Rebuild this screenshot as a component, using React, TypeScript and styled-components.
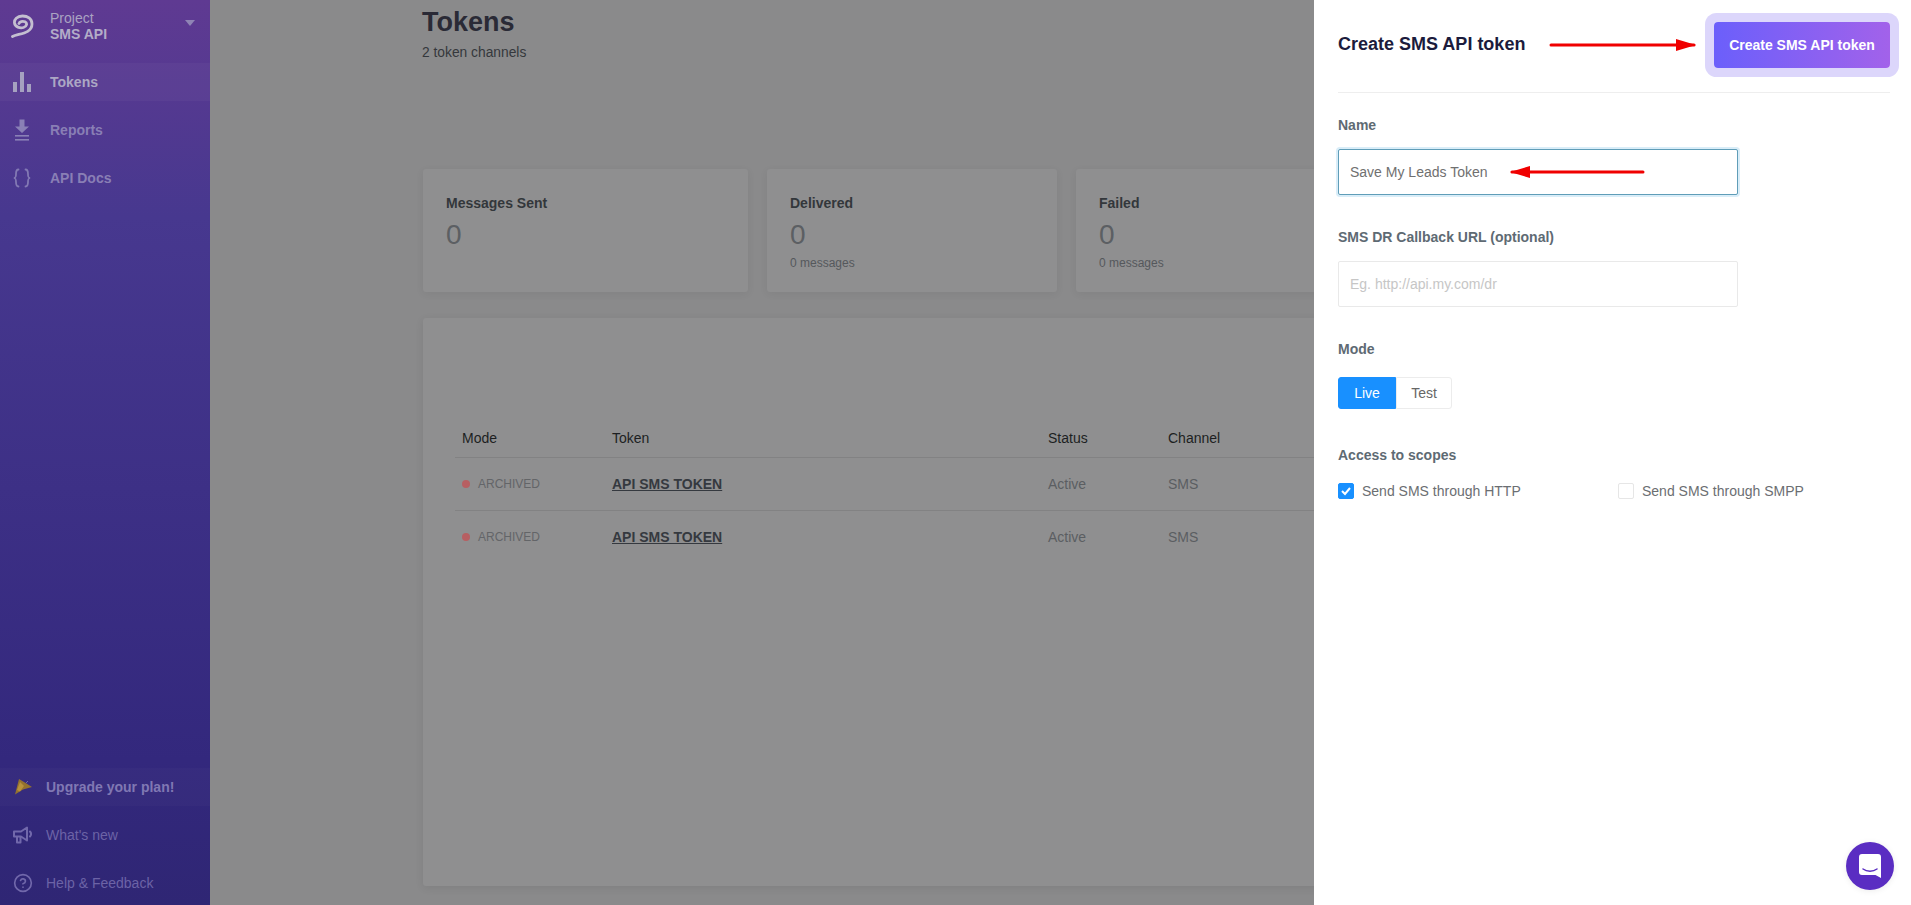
import React from 'react'
import styled, { createGlobalStyle } from 'styled-components'
import { CircleHelp } from 'lucide-react'

const GlobalStyle = createGlobalStyle`
  html, body {
    margin: 0;
    padding: 0;
    height: 100%;
    overflow: hidden;
  }
  body {
    font-family: "Liberation Sans", Arial, sans-serif;
    font-size: 14px;
    background: #8a8a8b;
  }
  * {
    box-sizing: border-box;
  }
`

const Page = styled.div`
  display: flex;
  width: 100vw;
  height: 100vh;
  overflow: hidden;
`

const Sidebar = styled.aside`
  display: flex;
  flex-direction: column;
  flex: 0 0 210px;
  height: 100%;
  background: linear-gradient(180deg, #5f3a92 0%, #47388f 24%, #33287d 84%, #2f2674 100%);
`

const ProjectHead = styled.div`
  display: flex;
  align-items: center;
  height: 63px;
  padding: 0 15px 11px 10px;
`

const ProjectName = styled.div`
  flex: 1;
  margin-left: 16px;
  line-height: 16px;
  color: #aaa3c2;
  strong {
    display: block;
    font-size: 14px;
    color: #b3adc8;
  }
`

const Caret = styled.span`
  width: 0;
  height: 0;
  margin-bottom: 7px;
  border-left: 5px solid transparent;
  border-right: 5px solid transparent;
  border-top: 6px solid #8f84b5;
`

const Nav = styled.nav`
  display: flex;
  flex-direction: column;
  gap: 10px;
  flex: 1;
`

const NavItem = styled.a<{ $active?: boolean }>`
  display: flex;
  align-items: center;
  gap: 16px;
  height: 38px;
  padding-left: 10px;
  font-weight: 700;
  color: ${p => (p.$active ? '#aca7c4' : '#897fb5')};
  background: ${p => (p.$active ? 'rgba(255, 255, 255, 0.035)' : 'transparent')};
`

const IconSlot = styled.span`
  display: flex;
  align-items: center;
  justify-content: center;
  width: 24px;
  height: 24px;
`

const FootNav = styled.div`
  display: flex;
  flex-direction: column;
  gap: 10px;
  padding-bottom: 3px;
`

const FootItem = styled.a<{ $strong?: boolean }>`
  display: flex;
  align-items: center;
  gap: 12px;
  height: 38px;
  padding-left: 12px;
  color: #6c63a6;
  font-weight: ${p => (p.$strong ? 700 : 400)};
  background: ${p => (p.$strong ? 'rgba(255, 255, 255, 0.02)' : 'transparent')};
  ${p => p.$strong && 'color: #8078b3;'}
`

const FootIcon = styled.span`
  display: flex;
  align-items: center;
  justify-content: center;
  width: 22px;
  height: 22px;
`

const Main = styled.main`
  flex: 1;
  min-width: 0;
  height: 100%;
  overflow: hidden;
  padding: 6px 0 0 212px;
`

const Title = styled.h1`
  margin: 0;
  font-size: 27px;
  line-height: 32px;
  font-weight: 700;
  color: #2a2a36;
`

const Subtitle = styled.div`
  margin-top: 4px;
  font-size: 13.8px;
  line-height: 21px;
  color: #35383c;
`

const CardRow = styled.div`
  display: flex;
  gap: 19px;
  width: 1000px;
  margin: 106px 0 0 1px;
`

const StatCard = styled.section<{ $width: number }>`
  flex: 0 0 ${p => p.$width}px;
  height: 123px;
  padding: 24px 23px;
  border-radius: 3px;
  background: #8f8f90;
  box-shadow: 0 2px 8px rgba(0, 0, 0, 0.06);
`

const StatTitle = styled.div`
  font-weight: 700;
  line-height: 20px;
  color: #33373b;
`

const StatValue = styled.div`
  margin-top: 2px;
  font-size: 28px;
  line-height: 40px;
  color: #5c5f63;
`

const StatNote = styled.div`
  font-size: 12px;
  line-height: 16px;
  color: #55585c;
`

const TableCard = styled.section`
  width: 1400px;
  height: 568px;
  margin: 26px 0 0 1px;
  padding: 101px 0 0 32px;
  border-radius: 3px;
  background: #8f8f90;
  box-shadow: 0 2px 8px rgba(0, 0, 0, 0.08);
`

const TableRow = styled.div<{ $header?: boolean; $last?: boolean }>`
  display: grid;
  grid-template-columns: 150px 436px 120px 1fr;
  align-items: center;
  height: ${p => (p.$header ? '39px' : '53px')};
  padding: 0 0 ${p => (p.$header ? '1px' : '0')} 7px;
  color: ${p => (p.$header ? '#1d1f22' : '#5b5e62')};
  border-bottom: 1px solid ${p => (p.$last ? 'transparent' : '#828283')};
`

const ModeCell = styled.span`
  display: flex;
  align-items: center;
  gap: 8px;
  font-size: 12px;
  color: #636568;
`

const Dot = styled.i`
  width: 8px;
  height: 8px;
  border-radius: 50%;
  background: #b75f62;
`

const TokenLink = styled.a`
  font-weight: 700;
  color: #35393f;
  text-decoration: underline;
`

const Drawer = styled.aside`
  position: relative;
  flex: 0 0 597px;
  height: 100%;
  padding: 0 21px 0 24px;
  background: #fff;
`

const DrawerHead = styled.header`
  display: flex;
  align-items: center;
  justify-content: space-between;
  height: 93px;
  padding: 0 0 3px;
  border-bottom: 1px solid #eeeeee;
`

const DrawerTitle = styled.h2`
  margin: 0;
  font-size: 18px;
  font-weight: 700;
  color: #1b1b3c;
`

const PrimaryButton = styled.button`
  width: 176px;
  height: 46px;
  border: 0;
  border-radius: 4px;
  font-family: inherit;
  font-size: 14px;
  font-weight: 700;
  color: #fff;
  background: linear-gradient(90deg, #6b5ffb 0%, #a262ea 100%);
  box-shadow: 0 0 0 9px #dcd6fb;
`

const Field = styled.div<{ $top: number }>`
  position: relative;
  margin-top: ${p => p.$top}px;
`

const Label = styled.label<{ $gap: number }>`
  display: block;
  margin-bottom: ${p => p.$gap}px;
  font-weight: 700;
  line-height: 20px;
  color: #5e6a73;
`

const TextInput = styled.input<{ $focused?: boolean }>`
  display: block;
  width: 400px;
  height: 46px;
  padding: 0 11px;
  border: 1px solid ${p => (p.$focused ? '#5f9db8' : '#e9e9e9')};
  border-radius: 2px;
  outline: 0;
  font-family: inherit;
  font-size: 14px;
  color: #707070;
  background: #fff;
  box-shadow: ${p => (p.$focused ? '0 0 0 2px #d9edf8' : 'none')};
  &::placeholder {
    color: #c6c6c6;
  }
`

const Segments = styled.div`
  display: flex;
  height: 32px;
`

const Segment = styled.span<{ $on?: boolean; $width: number }>`
  display: flex;
  align-items: center;
  justify-content: center;
  width: ${p => p.$width}px;
  color: ${p => (p.$on ? '#fff' : '#666')};
  background: ${p => (p.$on ? '#1890ff' : '#fff')};
  border: 1px solid ${p => (p.$on ? '#1890ff' : '#ececec')};
  border-radius: ${p => (p.$on ? '3px 0 0 3px' : '0 3px 3px 0')};
`

const ScopeGrid = styled.div`
  display: grid;
  grid-template-columns: 280px 1fr;
`

const Scope = styled.span`
  display: flex;
  align-items: center;
  gap: 8px;
  height: 16px;
  color: #6b6e72;
`

const Check = styled.span<{ $on?: boolean }>`
  display: flex;
  align-items: center;
  justify-content: center;
  width: 16px;
  height: 16px;
  border: 1px solid ${p => (p.$on ? '#1890ff' : '#e6e6e6')};
  border-radius: 2px;
  background: ${p => (p.$on ? '#1890ff' : '#fff')};
`

const Annotation = styled.svg<{ $left: number; $top: number; $width: number }>`
  position: absolute;
  left: ${p => p.$left}px;
  top: ${p => p.$top}px;
  width: ${p => p.$width}px;
  height: 14px;
  pointer-events: none;
`

const ChatButton = styled.button`
  position: absolute;
  right: 17px;
  bottom: 15px;
  display: flex;
  align-items: center;
  justify-content: center;
  width: 48px;
  height: 48px;
  padding: 0;
  border: 0;
  border-radius: 50%;
  background: #5a2dc2;
  box-shadow: 0 1px 6px rgba(0, 0, 0, 0.08);
`

function LogoIcon() {
  return (
    <svg width="24" height="24" viewBox="0 0 24 24" fill="none" stroke="#c4bfd0" strokeWidth="2.800" strokeLinecap="round">
      <path d="M2.500 22.500 C8 19.500 22 20 22 10 C22 4.500 17.500 2 12.500 2 C7 2 4 5.500 4.500 9 C5 13 10 14.500 13.500 13.500 C17 12.500 17.500 9 15 7.800 C12.500 6.800 9.500 7.500 9 9.500" />
    </svg>
  )
}

function BarsIcon() {
  return (
    <svg width="20" height="22" viewBox="0 0 20 22" fill="#a6a1c0">
      <rect x="1" y="11" width="4" height="10" />
      <rect x="8" y="1" width="4" height="20" />
      <rect x="15" y="13" width="4" height="8" />
    </svg>
  )
}

function DownloadIcon() {
  return (
    <svg width="16" height="22" viewBox="0 0 16 22" fill="#8a80b6">
      <path d="M5.500 0.500h5v7h4.500L8 14 1 7.500h4.500z" />
      <rect x="1" y="16" width="14" height="1.600" />
      <rect x="1" y="20" width="14" height="1.600" />
    </svg>
  )
}

function BracesIcon() {
  return (
    <svg width="20" height="20" viewBox="0 0 20 20" fill="none" stroke="#8379b4" strokeWidth="1.800" strokeLinecap="round">
      <path d="M6.500 1.500 C4 1.500 4 3.500 4 6 C4 8.500 4 9.500 2 10 C4 10.500 4 11.500 4 14 C4 16.500 4 18.500 6.500 18.500" />
      <path d="M13.500 1.500 C16 1.500 16 3.500 16 6 C16 8.500 16 9.500 18 10 C16 10.500 16 11.500 16 14 C16 16.500 16 18.500 13.500 18.500" />
    </svg>
  )
}

function PartyIcon() {
  return (
    <svg width="18" height="18" viewBox="0 0 18 18">
      <path d="M1 16.500 L5 1 L10 4 L18 9 L9 11.500 Z" fill="#94722f" />
      <path d="M3 12 L6 4 L10 8 L6 13.500 Z" fill="#b8923c" />
      <path d="M12 5 L14 3" stroke="#6f68a8" strokeWidth="1" />
    </svg>
  )
}

function MegaphoneIcon() {
  return (
    <svg width="20" height="18" viewBox="0 0 20 18" fill="none" stroke="#7168ab" strokeWidth="2" strokeLinejoin="round">
      <path d="M1 5.500 H8 L14 1.500 V14.500 L8 10.500 H1 Z" />
      <path d="M4 11 V16.500 H7.500 V11" />
      <path d="M17 5.500 C18.300 7 18.300 9 17 10.500" strokeLinecap="round" />
    </svg>
  )
}

function ChatIcon() {
  return (
    <svg width="24" height="26" viewBox="0 0 24 26">
      <path d="M4 1 H20 A3 3 0 0 1 23 4 V25 L17.500 22 H4 A3 3 0 0 1 1 19 V4 A3 3 0 0 1 4 1 Z" fill="#fff" />
      <path d="M5 16 C9 19 15 19 19 16" fill="none" stroke="#5a2dc2" strokeWidth="1.500" strokeLinecap="round" />
    </svg>
  )
}

function Arrow({ left, top, width, flip }: { left: number; top: number; width: number; flip?: boolean }) {
  const head = flip
    ? `M0 7 L20 1 L20 13 Z`
    : `M${width} 7 L${width - 20} 1 L${width - 20} 13 Z`
  return (
    <Annotation $left={left} $top={top} $width={width} viewBox={`0 0 ${width} 14`}>
      <line x1="2" y1="7" x2={width - 2} y2="7" stroke="#f00000" strokeWidth="3" strokeLinecap="round" />
      <path d={head} fill="#f00000" />
    </Annotation>
  )
}

const stats = [
  { title: 'Messages Sent', width: 325 },
  { title: 'Delivered', width: 290, note: '0 messages' },
  { title: 'Failed', width: 300, note: '0 messages' },
]

const rows = [0, 1]

export default function App() {
  return (
    <Page>
      <GlobalStyle />
      <Sidebar>
        <ProjectHead>
          <LogoIcon />
          <ProjectName>
            Project
            <strong>SMS API</strong>
          </ProjectName>
          <Caret />
        </ProjectHead>
        <Nav>
          <NavItem $active>
            <IconSlot><BarsIcon /></IconSlot>
            Tokens
          </NavItem>
          <NavItem>
            <IconSlot><DownloadIcon /></IconSlot>
            Reports
          </NavItem>
          <NavItem>
            <IconSlot><BracesIcon /></IconSlot>
            API Docs
          </NavItem>
        </Nav>
        <FootNav>
          <FootItem $strong>
            <FootIcon><PartyIcon /></FootIcon>
            Upgrade your plan!
          </FootItem>
          <FootItem>
            <FootIcon><MegaphoneIcon /></FootIcon>
            What's new
          </FootItem>
          <FootItem>
            <FootIcon><CircleHelp size={20} color="#7168ab" /></FootIcon>
            Help &amp; Feedback
          </FootItem>
        </FootNav>
      </Sidebar>

      <Main>
        <Title>Tokens</Title>
        <Subtitle>2 token channels</Subtitle>
        <CardRow>
          {stats.map(s => (
            <StatCard key={s.title} $width={s.width}>
              <StatTitle>{s.title}</StatTitle>
              <StatValue>0</StatValue>
              {s.note && <StatNote>{s.note}</StatNote>}
            </StatCard>
          ))}
        </CardRow>
        <TableCard>
          <TableRow $header>
            <span>Mode</span>
            <span>Token</span>
            <span>Status</span>
            <span>Channel</span>
          </TableRow>
          {rows.map(r => (
            <TableRow key={r} $last={r === rows.length - 1}>
              <ModeCell><Dot />ARCHIVED</ModeCell>
              <TokenLink>API SMS TOKEN</TokenLink>
              <span>Active</span>
              <span>SMS</span>
            </TableRow>
          ))}
        </TableCard>
      </Main>

      <Drawer>
        <DrawerHead>
          <DrawerTitle>Create SMS API token</DrawerTitle>
          <PrimaryButton>Create SMS API token</PrimaryButton>
        </DrawerHead>
        <Arrow left={235} top={38} width={147} />
        <Field $top={22}>
          <Label $gap={14}>Name</Label>
          <TextInput $focused readOnly defaultValue="Save My Leads Token" />
          <Arrow left={172} top={50} width={135} flip />
        </Field>
        <Field $top={32}>
          <Label $gap={14}>SMS DR Callback URL (optional)</Label>
          <TextInput placeholder="Eg. http://api.my.com/dr" readOnly />
        </Field>
        <Field $top={32}>
          <Label $gap={18}>Mode</Label>
          <Segments>
            <Segment $on $width={58}>Live</Segment>
            <Segment $width={56}>Test</Segment>
          </Segments>
        </Field>
        <Field $top={36}>
          <Label $gap={18}>Access to scopes</Label>
          <ScopeGrid>
            <Scope>
              <Check $on>
                <svg width="12" height="12" viewBox="0 0 12 12" fill="none" stroke="#fff" strokeWidth="2">
                  <path d="M2 6 L5 9 L10 3" />
                </svg>
              </Check>
              Send SMS through HTTP
            </Scope>
            <Scope>
              <Check />
              Send SMS through SMPP
            </Scope>
          </ScopeGrid>
        </Field>
        <ChatButton>
          <ChatIcon />
        </ChatButton>
      </Drawer>
    </Page>
  )
}
